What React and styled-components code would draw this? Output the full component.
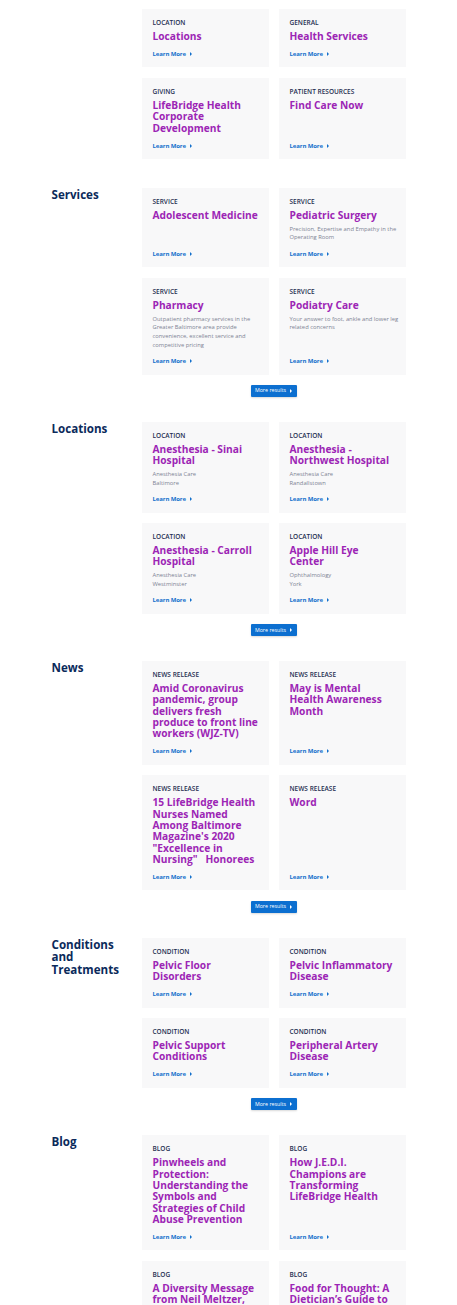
import React from 'react';
import styled, { createGlobalStyle } from 'styled-components';

const GlobalStyle = createGlobalStyle`
    body {
        margin:0;
        background:#fff;
        font-family:"Open Sans", "Liberation Sans", sans-serif;
        -webkit-font-smoothing:antialiased;
    }
`;

const Page = styled.main`
    width:354px;
    margin:0 auto;
    padding-top:9px;
`;

const Section = styled.section`
    display:grid;
    grid-template-columns:90px 264px;
    padding-bottom:${props => props.$space || 25}px;
`;

const Heading = styled.h2`
    margin:0;
    padding:1px 18px 0 0;
    font-size:11.6px;
    line-height:12.5px;
    font-weight:700;
    color:#0b2a5b;
`;

const Results = styled.div`
    display:flex;
    flex-direction:column;
    align-items:center;
`;

const Grid = styled.div`
    display:grid;
    grid-template-columns:repeat(2, minmax(0, 1fr));
    gap:10.5px 10px;
    width:100%;
`;

const Card = styled.article`
    display:flex;
    flex-direction:column;
    min-width:0;
    background:#f8f8f9;
    padding:10px 9px 9.5px 11px;
`;

const Body = styled.div`
    flex:1;
`;

const Label = styled.div`
    font-size:6.5px;
    line-height:8px;
    font-weight:600;
    text-transform:uppercase;
    color:#1f2f52;
    margin-bottom:4px;
`;

const Title = styled.h3`
    margin:0;
    font-size:10.2px;
    line-height:11.3px;
    font-weight:700;
    color:#9c25b5;
    white-space:pre-wrap;
`;

const Desc = styled.p`
    margin:3.4px 0 0;
    font-size:5.8px;
    line-height:8.7px;
    color:#7d8394;
    white-space:nowrap;
`;

const LearnMore = styled.a`
    display:flex;
    align-items:center;
    gap:4.5px;
    margin-top:7.7px;
    font-size:6px;
    line-height:8px;
    font-weight:700;
    letter-spacing:-0.1px;
    color:#1470cc;
    text-decoration:none;
`;

const Arrow = styled.span`
    width:0;
    height:0;
    border-top:2px solid transparent;
    border-bottom:2px solid transparent;
    border-left:2.6px solid ${props => props.$color || '#1470cc'};
`;

const MoreButton = styled.button`
    display:flex;
    align-items:center;
    justify-content:center;
    gap:4px;
    margin-top:10.5px;
    width:46px;
    height:12px;
    padding:0;
    border:none;
    border-radius:1px;
    background:#0c6fd0;
    box-shadow:0 1px 2px rgba(0,0,0,0.15);
    color:#fff;
    font-family:inherit;
    font-size:5.3px;
    line-height:1;
`;

// titles wrap on their own; a \n marks the few places the original breaks early
const sections = [
    {
        heading: null,
        space: 29,
        more: false,
        items: [
            { label: 'Location', title: 'Locations' },
            { label: 'General', title: 'Health Services' },
            { label: 'Giving', title: 'LifeBridge Health\nCorporate Development' },
            { label: 'Patient Resources', title: 'Find Care Now' },
        ],
    },
    {
        heading: 'Services',
        more: true,
        items: [
            { label: 'Service', title: 'Adolescent Medicine' },
            { label: 'Service', title: 'Pediatric Surgery', desc: ['Precision, Expertise and Empathy in the', 'Operating Room'] },
            { label: 'Service', title: 'Pharmacy', desc: ['Outpatient pharmacy services in the', 'Greater Baltimore area provide', 'convenience, excellent service and', 'competitive pricing'] },
            { label: 'Service', title: 'Podiatry Care', desc: ['Your answer to foot, ankle and lower leg', 'related concerns'] },
        ],
    },
    {
        heading: 'Locations',
        more: true,
        items: [
            { label: 'Location', title: 'Anesthesia - Sinai Hospital', desc: ['Anesthesia Care', 'Baltimore'] },
            { label: 'Location', title: 'Anesthesia -\nNorthwest Hospital', desc: ['Anesthesia Care', 'Randallstown'] },
            { label: 'Location', title: 'Anesthesia - Carroll Hospital', desc: ['Anesthesia Care', 'Westminster'] },
            { label: 'Location', title: 'Apple Hill Eye\nCenter', desc: ['Ophthalmology', 'York'] },
        ],
    },
    {
        heading: 'News',
        more: true,
        items: [
            { label: 'News Release', title: 'Amid Coronavirus pandemic, group delivers fresh produce to front line workers (WJZ-TV)' },
            { label: 'News Release', title: 'May is Mental\nHealth Awareness\nMonth' },
            { label: 'News Release', title: '15 LifeBridge Health Nurses Named Among Baltimore Magazine\'s 2020 "Excellence in Nursing"   Honorees' },
            { label: 'News Release', title: 'Word' },
        ],
    },
    {
        heading: 'Conditions and Treatments',
        more: true,
        items: [
            { label: 'Condition', title: 'Pelvic Floor\nDisorders' },
            { label: 'Condition', title: 'Pelvic Inflammatory\nDisease' },
            { label: 'Condition', title: 'Pelvic Support\nConditions' },
            { label: 'Condition', title: 'Peripheral Artery\nDisease' },
        ],
    },
    {
        heading: 'Blog',
        more: true,
        items: [
            { label: 'Blog', title: 'Pinwheels and Protection: Understanding the Symbols and Strategies of Child Abuse Prevention' },
            { label: 'Blog', title: 'How J.E.D.I. Champions are Transforming LifeBridge Health' },
            { label: 'Blog', title: 'A Diversity Message from Neil Meltzer, President and CEO' },
            { label: 'Blog', title: 'Food for Thought: A Dietician’s Guide to Healthy Eating' },
        ],
    },
];

const ResultCard = ({ label, title, desc }) => (
    <Card>
        <Body>
            <Label>{label}</Label>
            <Title>{title}</Title>
            {desc && (
                <Desc>
                    {desc.map((line, i) => (
                        <React.Fragment key={i}>
                            {i > 0 && <br />}
                            {line}
                        </React.Fragment>
                    ))}
                </Desc>
            )}
        </Body>
        <LearnMore href="#">
            Learn More <Arrow />
        </LearnMore>
    </Card>
);

const App = () => (
    <>
        <GlobalStyle />
        <Page>
            {sections.map((section, i) => (
                <Section key={i} $space={section.space}>
                    <Heading>{section.heading}</Heading>
                    <Results>
                        <Grid>
                            {section.items.map((item, j) => (
                                <ResultCard key={j} {...item} />
                            ))}
                        </Grid>
                        {section.more && (
                            <MoreButton>
                                More results <Arrow $color="#fff" />
                            </MoreButton>
                        )}
                    </Results>
                </Section>
            ))}
        </Page>
    </>
);

export default App;
